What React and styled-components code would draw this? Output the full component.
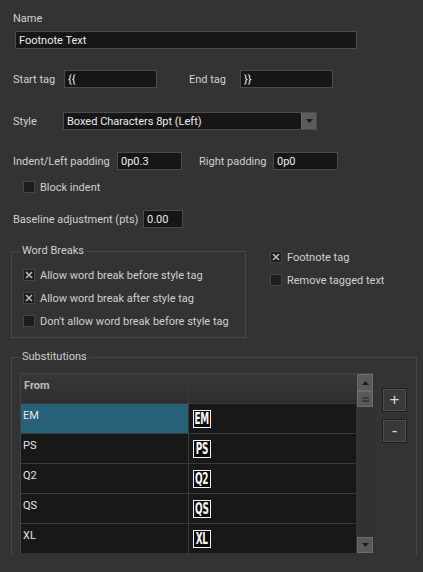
import React from "react";
import styled, { createGlobalStyle } from "styled-components";

const GlobalStyle = createGlobalStyle`
	body {
		margin: 0;
		background: #333333;
	}
	* {
		box-sizing: border-box;
	}
`;

const Panel = styled.div`
	width: 423px;
	height: 555px;
	overflow: hidden;
	padding: 12px 0 0 13px;
	background: #333333;
	color: #d0d0d0;
	font-family: Roboto, "Liberation Sans", Arial, sans-serif;
	font-size: 11px;
	display: flex;
	flex-direction: column;
`;

const Caption = styled.div`
	line-height: 13px;
	height: 13px;
`;

const Row = styled.div`
	display: flex;
	align-items: center;
	height: 18px;
	margin-top: ${(p) => p.$top}px;
`;

const FieldLabel = styled.span`
	width: ${(p) => p.$w}px;
	flex: none;
	line-height: 13px;
	white-space: nowrap;
	margin-left: ${(p) => p.$gap || 0}px;
`;

const TextInput = styled.input`
	width: ${(p) => p.$w}px;
	height: 18px;
	flex: none;
	margin: 0;
	margin-left: ${(p) => p.$left || 0}px;
	padding: 0 3px;
	background: #161616;
	border: 1px solid #4b4b4b;
	color: #ececec;
	font-family: Roboto, "Liberation Sans", Arial, sans-serif;
	font-size: 11px;
	outline: none;
`;

const Select = styled.div`
	width: 254px;
	height: 18px;
	display: flex;
	align-items: center;
	justify-content: space-between;
	background: #161616;
	border: 1px solid #4b4b4b;
	padding-left: 3px;
	color: #ececec;
`;

const SelectArrow = styled.div`
	width: 15px;
	height: 16px;
	background: #5c5c5c;
	border-left: 1px solid #6a6a6a;
	display: flex;
	align-items: center;
	justify-content: center;
`;

const Check = styled.div`
	display: flex;
	align-items: center;
	gap: 5px;
	height: 12px;
	line-height: 13px;
	white-space: nowrap;
`;

const Box = styled.span`
	width: 12px;
	height: 12px;
	flex: none;
	background: #1d1d1d;
	border: 1px solid #454545;
	display: flex;
	align-items: center;
	justify-content: center;
`;

const BlockIndent = styled.div`
	margin-top: 11px;
	padding-left: 10px;
`;

const Middle = styled.div`
	display: flex;
	margin-top: 23px;
	margin-left: -2px;
`;

const Group = styled.div`
	position: relative;
	border: 1px solid #474747;
	width: ${(p) => p.$w}px;
	padding: ${(p) => p.$pad};
	flex: none;
`;

const Legend = styled.span`
	position: absolute;
	top: -8px;
	left: 8px;
	padding: 0 2px;
	background: #333333;
	line-height: 13px;
	color: #cfcfcf;
`;

const CheckList = styled.div`
	display: flex;
	flex-direction: column;
	gap: 11px;
`;

const SideChecks = styled(CheckList)`
	margin-left: 24px;
`;

const SubsGroup = styled(Group)`
	margin-top: 19px;
	margin-left: -2px;
	border-bottom: none;
	flex: 1;
	display: flex;
	align-items: flex-start;
`;

const Table = styled.div`
	display: flex;
	border-top: 1px solid #444444;
	border-left: 1px solid #444444;
`;

const Grid = styled.div`
	display: grid;
	grid-template-columns: 167px 167px;
	grid-auto-rows: 29px;
	column-gap: 1px;
	row-gap: 1px;
	background: #3a3a3a;
	width: 335px;
`;

const HeadCell = styled.div`
	background: linear-gradient(#383838, #2e2e2e);
	font-weight: bold;
	color: #bdbdbd;
	padding: 5px 3px;
	line-height: 13px;
`;

const Cell = styled.div`
	background: ${(p) => (p.$selected ? "#266177" : "#181818")};
	color: #e4e4e4;
	padding: 5px 2px;
	line-height: 13px;
	display: flex;
	align-items: flex-start;
`;

const GlyphCell = styled.div`
	background: #181818;
	padding: 0 4px;
	display: flex;
	align-items: center;
`;

const Glyph = styled.span`
	width: 18px;
	height: 18px;
	border: 1px solid #f2f2f2;
	background: #0c0c0c;
	display: flex;
	align-items: center;
	justify-content: center;
	overflow: hidden;
`;

const GlyphText = styled.span`
	color: #f6f6f6;
	font-family: "DejaVu Sans Condensed", "Liberation Sans Narrow", sans-serif;
	font-weight: bold;
	font-size: 16px;
	line-height: 16px;
	letter-spacing: -0.5px;
	transform: scaleX(0.62);
	white-space: nowrap;
`;

const Scrollbar = styled.div`
	width: 17px;
	margin-left: 1px;
	display: flex;
	flex-direction: column;
	background: #323232;
`;

const ScrollButton = styled.div`
	width: 16px;
	height: ${(p) => p.$h}px;
	background: #5a5a5a;
	border: 1px solid #6b6b6b;
	display: flex;
	align-items: center;
	justify-content: center;
	margin-top: ${(p) => (p.$bottom ? "auto" : "0")};
`;

const SideButtons = styled.div`
	display: flex;
	flex-direction: column;
	gap: 7px;
	margin-left: 8px;
	margin-top: 15px;
`;

const ToolButton = styled.div`
	width: 25px;
	height: 24px;
	background: #393939;
	border: 1px solid #1f1f1f;
	box-shadow: inset 0 0 0 1px #4e4e4e;
	display: flex;
	align-items: center;
	justify-content: center;
	color: #d8d8d8;
	font-size: 17px;
	font-family: "Liberation Sans", Arial, sans-serif;
`;

const Cross = () => (
	<svg width="8" height="8" viewBox="0 0 8 8">
		<path d="M1 1 L7 7 M7 1 L1 7" stroke="#b8b8b8" strokeWidth="1.6" />
	</svg>
);

const CheckItem = ({ checked, label }) => (
	<Check>
		<Box>{checked && <Cross />}</Box>
		<span>{label}</span>
	</Check>
);

const rows = ["EM", "PS", "Q2", "QS", "XL"];

const App = () => {
	return (
		<>
			<GlobalStyle />
			<Panel>
				<Caption>Name</Caption>
				<Row $top={6}>
					<TextInput $w={342} $left={2} defaultValue="Footnote Text" readOnly />
				</Row>
				<Row $top={21}>
					<FieldLabel $w={51}>Start tag</FieldLabel>
					<TextInput $w={93} defaultValue="{{" readOnly />
					<FieldLabel $w={51} $gap={32}>End tag</FieldLabel>
					<TextInput $w={93} defaultValue="}}" readOnly />
				</Row>
				<Row $top={24}>
					<FieldLabel $w={50}>Style</FieldLabel>
					<Select>
						<span>Boxed Characters 8pt (Left)</span>
						<SelectArrow>
							<svg width="7" height="4" viewBox="0 0 7 4">
								<path d="M0 0 L7 0 L3.5 4 Z" fill="#1c1c1c" />
							</svg>
						</SelectArrow>
					</Select>
				</Row>
				<Row $top={22}>
					<FieldLabel $w={104}>Indent/Left padding</FieldLabel>
					<TextInput $w={65} defaultValue="0p0.3" readOnly />
					<FieldLabel $w={74} $gap={17}>Right padding</FieldLabel>
					<TextInput $w={65} defaultValue="0p0" readOnly />
				</Row>
				<BlockIndent>
					<CheckItem label="Block indent" />
				</BlockIndent>
				<Row $top={17}>
					<FieldLabel $w={130}>Baseline adjustment (pts)</FieldLabel>
					<TextInput $w={40} defaultValue="0.00" readOnly />
				</Row>
				<Middle>
					<Group $w={235} $pad="17px 11px 10px 11px">
						<Legend>Word Breaks</Legend>
						<CheckList>
							<CheckItem checked label="Allow word break before style tag" />
							<CheckItem checked label="Allow word break after style tag" />
							<CheckItem label="Don't allow word break before style tag" />
						</CheckList>
					</Group>
					<SideChecks>
						<CheckItem checked label="Footnote tag" />
						<CheckItem label="Remove tagged text" />
					</SideChecks>
				</Middle>
				<SubsGroup $w={406} $pad="15px 0 0 8px">
					<Legend>Substitutions</Legend>
					<Table>
						<Grid>
							<HeadCell>From</HeadCell>
							<HeadCell />
							{rows.map((r, i) => (
								<React.Fragment key={r}>
									<Cell $selected={i === 0}>{r}</Cell>
									<GlyphCell>
										<Glyph>
											<GlyphText>{r}</GlyphText>
										</Glyph>
									</GlyphCell>
								</React.Fragment>
							))}
						</Grid>
						<Scrollbar>
							<ScrollButton $h={17}>
								<svg width="7" height="4" viewBox="0 0 7 4">
									<path d="M0 4 L7 4 L3.5 0 Z" fill="#1c1c1c" />
								</svg>
							</ScrollButton>
							<ScrollButton $h={16}>
								<svg width="7" height="5" viewBox="0 0 7 5">
									<path d="M0 1 H7 M0 4 H7" stroke="#1c1c1c" strokeWidth="1" />
								</svg>
							</ScrollButton>
							<ScrollButton $h={16} $bottom>
								<svg width="7" height="4" viewBox="0 0 7 4">
									<path d="M0 0 L7 0 L3.5 4 Z" fill="#1c1c1c" />
								</svg>
							</ScrollButton>
						</Scrollbar>
					</Table>
					<SideButtons>
						<ToolButton>+</ToolButton>
						<ToolButton>-</ToolButton>
					</SideButtons>
				</SubsGroup>
			</Panel>
		</>
	);
};

export default App;
